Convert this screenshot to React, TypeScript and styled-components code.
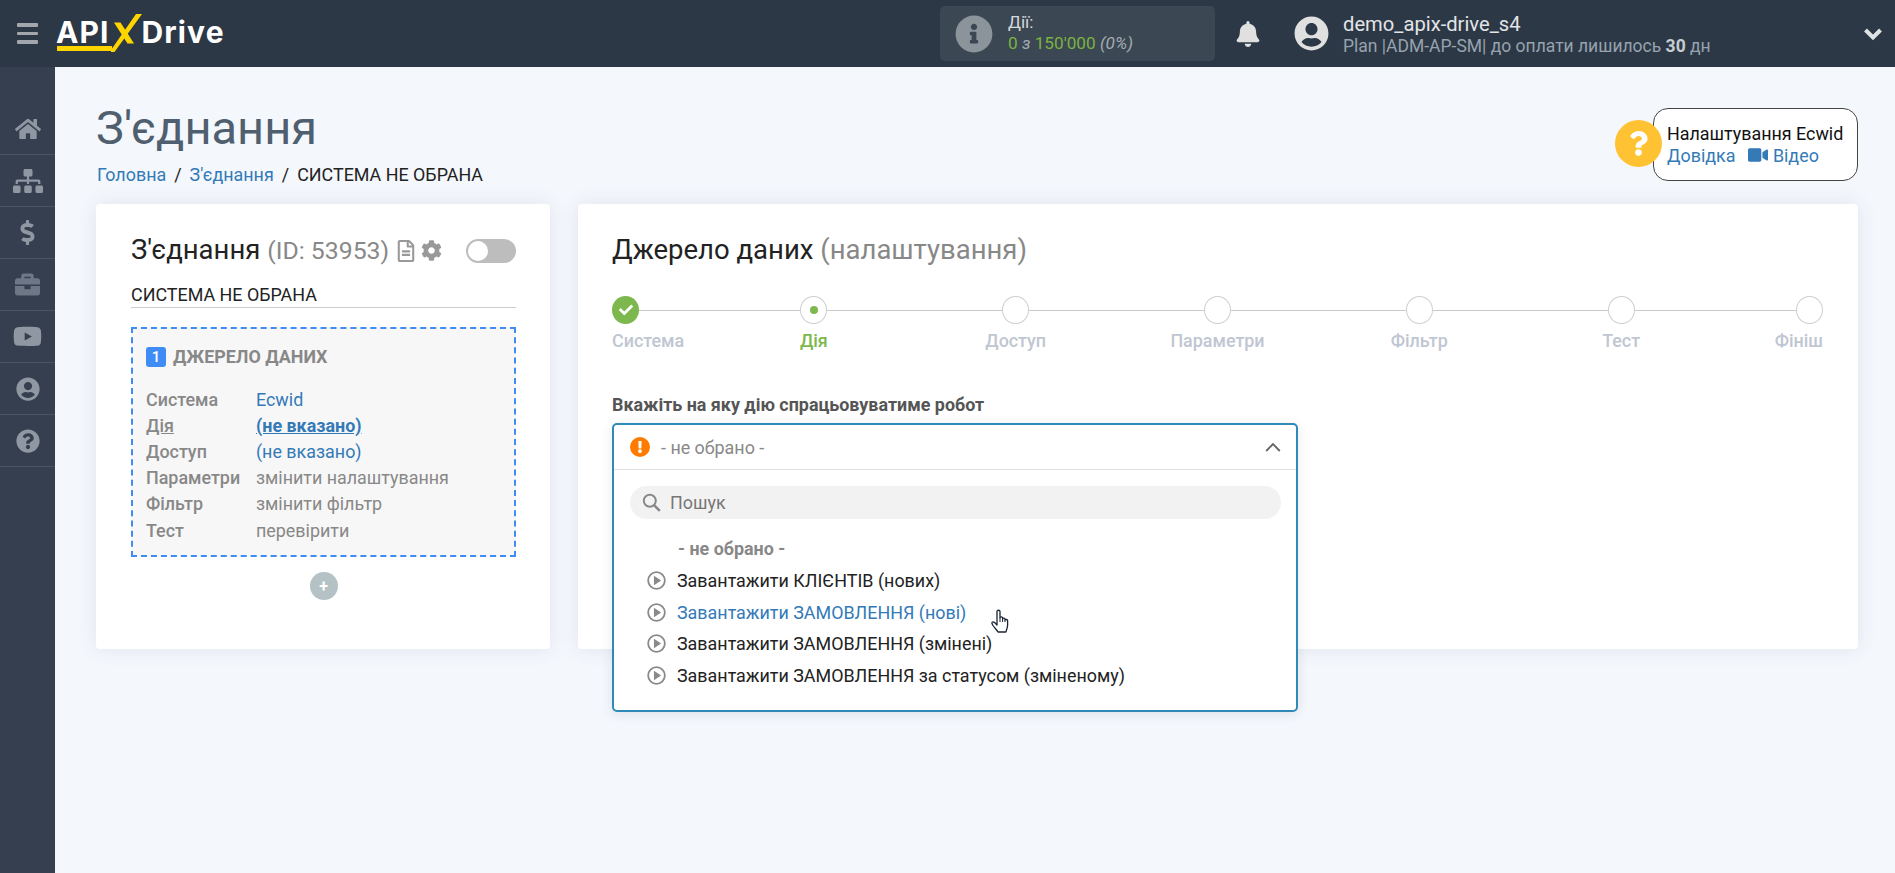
import React from 'react';
import styled, { createGlobalStyle } from 'styled-components';
import {
  FaBell,
  FaBriefcase,
  FaCheck,
  FaCog,
  FaDollarSign,
  FaExclamation,
  FaHome,
  FaInfoCircle,
  FaQuestion,
  FaQuestionCircle,
  FaRegFileAlt,
  FaSitemap,
  FaUserCircle,
  FaVideo,
  FaYoutube,
} from 'react-icons/fa';

const GlobalStyle = createGlobalStyle`
  html, body {
    margin: 0;
    height: 100%;
    background: #f4f7fc;
    font-family: Roboto, "Noto Sans", sans-serif;
    overflow: hidden;
  }
  * { box-sizing: border-box; }
`;

const navItems = [
  { icon: FaHome, size: 26 },
  { icon: FaSitemap, size: 30 },
  { icon: FaDollarSign, size: 25 },
  { icon: FaBriefcase, size: 25, dim: true },
  { icon: FaYoutube, size: 29 },
  { icon: FaUserCircle, size: 24 },
  { icon: FaQuestionCircle, size: 24 },
];

const summaryRows = [
  { label: 'Система', value: 'Ecwid', kind: 'link' },
  { label: 'Дія', value: '(не вказано)', kind: 'current' },
  { label: 'Доступ', value: '(не вказано)', kind: 'link' },
  { label: 'Параметри', value: 'змінити налаштування', kind: 'muted' },
  { label: 'Фільтр', value: 'змінити фільтр', kind: 'muted' },
  { label: 'Тест', value: 'перевірити', kind: 'muted' },
];

const steps = ['Система', 'Дія', 'Доступ', 'Параметри', 'Фільтр', 'Тест', 'Фініш'];

const options = [
  'Завантажити КЛІЄНТІВ (нових)',
  'Завантажити ЗАМОВЛЕННЯ (нові)',
  'Завантажити ЗАМОВЛЕННЯ (змінені)',
  'Завантажити ЗАМОВЛЕННЯ за статусом (зміненому)',
];

const PlayIcon = () => (
  <svg width="19" height="19" viewBox="0 0 18 18">
    <circle cx="9" cy="9" r="7.9" fill="none" stroke="#8a8a8a" strokeWidth="1.7" />
    <path d="M6.600 4.400 L13.400 9 L6.600 13.600 Z" fill="#8a8a8a" />
  </svg>
);

const SearchIcon = () => (
  <svg width="19" height="19" viewBox="0 0 19 19">
    <circle cx="7.800" cy="7.800" r="6" fill="none" stroke="#888" strokeWidth="2" />
    <path d="M12.300 12.300 L17.800 17.800" stroke="#888" strokeWidth="2.600" />
  </svg>
);

const HandCursor = () => (
  <svg width="18" height="24" viewBox="0 0 18 24">
    <path
      d="M6 2.500C6 .8 9 .8 9 2.500V8.800c0-1.200 2.600-1.200 2.600 0V10c0-1.200 2.400-1.200 2.400 0v1c0-1 2.600-1 2.600.4V16c0 3-1 4.500-1.800 7H7c-1-2-3-3.500-5-6.500C1 15 .4 13.500 1.500 13c1-.5 2.500.5 4.500 3V2.500Z"
      fill="#fff"
      stroke="#1a2433"
      strokeWidth="1.300"
      strokeLinejoin="round"
    />
    <path d="M9 8.800V13M11.600 10V13M14 11V13" stroke="#1a2433" strokeWidth="1" fill="none" />
  </svg>
);

export default function App() {
  return (
    <>
      <GlobalStyle />
      <Header>
        <Burger>
          <span />
          <span />
          <span />
        </Burger>
        <Logo>
          <LogoWord>API</LogoWord>
          <LogoMark width="31" height="42" viewBox="0 0 31 42">
            <path d="M25 1 H31 L3.500 39 H0 V37 Z" fill="#ffd500" />
            <path d="M3 9.500 H9.500 L23 30.500 H16.500 Z" fill="#ffd500" />
          </LogoMark>
          <LogoWord>Drive</LogoWord>
          <LogoLine />
        </Logo>
        <ActionsBox>
          <FaInfoCircle size={38} color="#8b939b" />
          <ActionsText>
            <ActionsLabel>Дії:</ActionsLabel>
            <ActionsCount>
              0 <em>з</em> 150'000 <i>(0%)</i>
            </ActionsCount>
          </ActionsText>
        </ActionsBox>
        <BellWrap>
          <FaBell size={26} color="#e0e0e0" />
        </BellWrap>
        <FaUserCircle size={35} color="#e0e0e0" />
        <UserText>
          <UserName>demo_apix-drive_s4</UserName>
          <UserPlan>
            Plan |ADM-AP-SM| до оплати лишилось <b>30</b> дн
          </UserPlan>
        </UserText>
        <HeaderChevron width="20" height="14" viewBox="0 0 20 14">
          <path d="M2.500 3 L10 10.500 L17.500 3" fill="none" stroke="#dfe3e6" strokeWidth="4" />
        </HeaderChevron>
      </Header>

      <Body>
        <Sidebar>
          {navItems.map((item, i) => (
            <NavItem key={i} $dim={item.dim}>
              <item.icon size={item.size} />
            </NavItem>
          ))}
        </Sidebar>

        <Main>
          <TopRow>
            <div>
              <PageTitle>З'єднання</PageTitle>
              <Breadcrumb>
                <a>Головна</a>
                <Sep>/</Sep>
                <a>З'єднання</a>
                <Sep>/</Sep>
                <span>СИСТЕМА НЕ ОБРАНА</span>
              </Breadcrumb>
            </div>
            <Help>
              <HelpBadge>
                <FaQuestion size={25} color="#fff" />
              </HelpBadge>
              <HelpBox>
                <HelpTitle>Налаштування Ecwid</HelpTitle>
                <HelpLinks>
                  <a>Довідка</a>
                  <a>
                    <FaVideo size={20} /> Відео
                  </a>
                </HelpLinks>
              </HelpBox>
            </Help>
          </TopRow>

          <Cards>
            <LeftCard>
              <CardHead>
                <CardTitle>
                  З'єднання <IdText>(ID: 53953)</IdText>
                </CardTitle>
                <FaRegFileAlt size={22} color="#999" />
                <FaCog size={21} color="#999" />
                <Toggle />
              </CardHead>
              <SystemName>СИСТЕМА НЕ ОБРАНА</SystemName>
              <SourceBox>
                <SourceTitle>
                  <NumBadge>1</NumBadge>
                  ДЖЕРЕЛО ДАНИХ
                </SourceTitle>
                <SummaryList>
                  {summaryRows.map(row => (
                    <SummaryRow key={row.label}>
                      <SummaryLabel $current={row.kind === 'current'}>{row.label}</SummaryLabel>
                      <SummaryValue $kind={row.kind}>{row.value}</SummaryValue>
                    </SummaryRow>
                  ))}
                </SummaryList>
              </SourceBox>
              <AddRow>
                <AddButton>+</AddButton>
              </AddRow>
            </LeftCard>

            <RightCard>
              <CardTitle>
                Джерело даних <Grey>(налаштування)</Grey>
              </CardTitle>
              <Stepper>
                {steps.map((step, i) => {
                  const first = i === 0;
                  const last = i === steps.length - 1;
                  return (
                    <Step key={step} $edge={first || last} $last={last}>
                      <StepTrack>
                        {!first && <StepLine />}
                        <StepCircle $done={first}>
                          {first && <FaCheck size={14} color="#fff" />}
                          {i === 1 && <StepDot />}
                        </StepCircle>
                        {!last && <StepLine />}
                      </StepTrack>
                      <StepLabel $active={i === 1}>{step}</StepLabel>
                    </Step>
                  );
                })}
              </Stepper>
              <FieldLabel>Вкажіть на яку дію спрацьовуватиме робот</FieldLabel>
              <SelectHolder>
                <Select>
                  <SelectHead>
                    <WarnIcon>
                      <FaExclamation size={12} color="#fff" />
                    </WarnIcon>
                    <SelectValue>- не обрано -</SelectValue>
                    <svg width="16" height="10" viewBox="0 0 16 10">
                      <path d="M1.200 9 L8 2 L14.800 9" fill="none" stroke="#666" strokeWidth="1.800" />
                    </svg>
                  </SelectHead>
                  <SelectMenu>
                    <SearchBox>
                      <SearchIcon />
                      Пошук
                    </SearchBox>
                    <OptionHeader>- не обрано -</OptionHeader>
                    {options.map((option, i) => (
                      <Option key={option} $hover={i === 1}>
                        <PlayIcon />
                        {option}
                        {i === 1 && (
                          <CursorSpot>
                            <HandCursor />
                          </CursorSpot>
                        )}
                      </Option>
                    ))}
                  </SelectMenu>
                </Select>
              </SelectHolder>
            </RightCard>
          </Cards>
        </Main>
      </Body>
    </>
  );
}

const Header = styled.header`
  height: 67px;
  background: #2c3846;
  display: flex;
  align-items: center;
  padding: 0 12px 0 17px;
`;

const Burger = styled.div`
  width: 21px;
  display: flex;
  flex-direction: column;
  gap: 5px;

  span {
    display: block;
    height: 3.5px;
    background: #a2a7ad;
    border-radius: 1px;
  }
`;

const Logo = styled.div`
  position: relative;
  margin-left: 18px;
  width: 170px;
  height: 46px;
  display: flex;
  align-items: center;
`;

const LogoWord = styled.span`
  font-family: Inter, "Open Sans", sans-serif;
  font-weight: 700;
  font-size: 30px;
  letter-spacing: 1.1px;
  color: #fff;
  margin-top: -3px;
`;

const LogoMark = styled.svg`
  margin: 0 0 0 1px;
  flex: none;
`;

const LogoLine = styled.span`
  position: absolute;
  left: 1px;
  bottom: 6px;
  width: 55px;
  height: 4.5px;
  background: #ffd500;
`;

const ActionsBox = styled.div`
  margin-left: 714px;
  width: 275px;
  height: 55px;
  border-radius: 5px;
  background: #3b4752;
  display: flex;
  align-items: center;
  gap: 15px;
  padding-left: 15px;
`;

const ActionsText = styled.div`
  display: flex;
  flex-direction: column;
  gap: 1px;
  font-size: 17.2px;
  margin-top: -2px;
`;

const ActionsLabel = styled.span`
  color: #d6d9dc;
`;

const ActionsCount = styled.span`
  color: #7cb342;

  em,
  i {
    color: #a3abb3;
  }
`;

const BellWrap = styled.div`
  margin: 0 33px 0 20px;
  display: flex;
`;

const UserText = styled.div`
  margin-left: 14px;
  display: flex;
  flex-direction: column;
`;

const UserName = styled.span`
  color: #e2e4e6;
  font-size: 20.2px;
`;

const UserPlan = styled.span`
  color: #97a3ae;
  font-size: 17.5px;

  b {
    color: #c6ccd2;
  }
`;

const HeaderChevron = styled.svg`
  margin-left: auto;
`;

const Body = styled.div`
  display: flex;
  height: 806px;
`;

const Sidebar = styled.nav`
  width: 55px;
  background: #353f4f;
  padding-top: 36px;
  flex: none;
`;

const NavItem = styled.div<{ $dim?: boolean }>`
  height: 52px;
  border-bottom: 1px solid #4a5462;
  color: ${p => (p.$dim ? '#6d7785' : '#8f98a2')};
  display: flex;
  align-items: center;
  justify-content: center;
`;

const Main = styled.main`
  flex: 1;
  padding: 0 37px 0 41px;
`;

const TopRow = styled.div`
  height: 137px;
  display: flex;
  justify-content: space-between;
  align-items: flex-start;
`;

const PageTitle = styled.h1`
  margin: 36px 0 0;
  font-size: 47px;
  line-height: 50px;
  font-weight: 400;
  color: #4f5f6f;
`;

const Breadcrumb = styled.div`
  margin-top: 11px;
  padding-left: 1px;
  font-size: 17.9px;
  line-height: 22px;
  color: #222;

  a {
    color: #337ab7;
  }
`;

const Sep = styled.span`
  margin: 0 8px;
`;

const Help = styled.div`
  margin-top: 41px;
  display: flex;
  align-items: center;
`;

const HelpBadge = styled.div`
  width: 47px;
  height: 47px;
  border-radius: 50%;
  background: #ffc233;
  margin: -2px -9px 0 0;
  position: relative;
  display: flex;
  align-items: center;
  justify-content: center;
`;

const HelpBox = styled.div`
  width: 205px;
  height: 73px;
  border: 1px solid #444;
  border-radius: 15px;
  background: #fff;
  padding: 14px 0 0 13px;
`;

const HelpTitle = styled.div`
  font-size: 17.9px;
  line-height: 22px;
  color: #111;
`;

const HelpLinks = styled.div`
  display: flex;
  gap: 13px;
  font-size: 17.9px;
  line-height: 22px;
  color: #337ab7;

  svg {
    vertical-align: -3px;
  }
`;

const Cards = styled.div`
  display: flex;
  gap: 28px;
  align-items: flex-start;
`;

const Card = styled.section`
  height: 445px;
  background: #fff;
  border-radius: 4px;
  box-shadow: 0 0 20px rgba(60, 80, 110, 0.1);
`;

const LeftCard = styled(Card)`
  width: 454px;
  padding: 28px 34px 0 35px;
`;

const RightCard = styled(Card)`
  flex: 1;
  padding: 28px 35px 0 34px;
`;

const CardHead = styled.div`
  display: flex;
  align-items: center;
  gap: 4px;

  h2 {
    margin-right: 2px;
  }
`;

const CardTitle = styled.h2`
  margin: 0;
  font-size: 27.5px;
  line-height: 36px;
  font-weight: 400;
  color: #222;
`;

const Grey = styled.span`
  color: #888;
`;

const IdText = styled(Grey)`
  font-size: 24.8px;
`;

const Toggle = styled.span`
  margin-left: auto;
  width: 50px;
  height: 24px;
  border-radius: 12px;
  background: #bdbdbd;
  display: flex;
  align-items: center;
  padding-left: 2px;

  &::before {
    content: '';
    width: 20px;
    height: 20px;
    border-radius: 50%;
    background: #fff;
  }
`;

const SystemName = styled.div`
  margin-top: 14px;
  font-size: 17.9px;
  line-height: 24px;
  color: #222;
  border-bottom: 1px solid #ccc;
`;

const SourceBox = styled.div`
  margin-top: 19px;
  height: 230px;
  border: 2px dashed #3f8cf5;
  background: #f7f7f7;
  padding: 17px 13px 0;
`;

const SourceTitle = styled.div`
  display: flex;
  align-items: center;
  gap: 7px;
  font-size: 17.9px;
  line-height: 22px;
  font-weight: 700;
  color: #888;
`;

const NumBadge = styled.span`
  width: 20px;
  height: 20px;
  border-radius: 3px;
  background: #3f8cf5;
  color: #fff;
  font-size: 15px;
  font-weight: 500;
  display: flex;
  align-items: center;
  justify-content: center;
`;

const SummaryList = styled.div`
  margin-top: 18px;
  display: flex;
  flex-direction: column;
`;

const SummaryRow = styled.div`
  display: flex;
  height: 26.2px;
  align-items: center;
  font-size: 17.9px;
`;

const SummaryLabel = styled.span<{ $current?: boolean }>`
  width: 110px;
  font-weight: 500;
  color: #888;
  text-decoration: ${p => (p.$current ? 'underline' : 'none')};
`;

const SummaryValue = styled.span<{ $kind: string }>`
  color: ${p => (p.$kind === 'muted' ? '#888' : '#337ab7')};
  font-weight: ${p => (p.$kind === 'current' ? 700 : 400)};
  text-decoration: ${p => (p.$kind === 'current' ? 'underline' : 'none')};
`;

const AddRow = styled.div`
  margin-top: 15px;
  display: flex;
  justify-content: center;
`;

const AddButton = styled.span`
  width: 28px;
  height: 28px;
  border-radius: 50%;
  background: #b4c2c6;
  color: #fff;
  font-size: 16px;
  font-weight: 700;
  display: flex;
  align-items: center;
  justify-content: center;
`;

const Stepper = styled.div`
  margin-top: 28px;
  display: flex;
`;

const Step = styled.div<{ $edge: boolean; $last: boolean }>`
  flex: ${p => (p.$edge ? 1 : 2)} 1 0;
  min-width: 0;
  display: flex;
  flex-direction: column;
  align-items: ${p => (p.$last ? 'flex-end' : p.$edge ? 'flex-start' : 'center')};
`;

const StepTrack = styled.div`
  width: 100%;
  display: flex;
  align-items: center;
`;

const StepLine = styled.span`
  flex: 1;
  height: 1px;
  background: #c9c9c9;
`;

const StepCircle = styled.span<{ $done: boolean }>`
  width: 27px;
  height: 28px;
  flex: none;
  border-radius: 50%;
  border: ${p => (p.$done ? 'none' : '1px solid #cfcfcf')};
  background: ${p => (p.$done ? '#7cb84e' : '#fff')};
  display: flex;
  align-items: center;
  justify-content: center;
`;

const StepDot = styled.span`
  width: 8px;
  height: 8px;
  border-radius: 50%;
  background: #7cb84e;
`;

const StepLabel = styled.span<{ $active: boolean }>`
  margin-top: 5px;
  font-size: 17.9px;
  line-height: 24px;
  font-weight: 500;
  white-space: nowrap;
  color: ${p => (p.$active ? '#7cb84e' : '#c0c6d2')};
`;

const FieldLabel = styled.div`
  margin-top: 41px;
  font-size: 17.9px;
  line-height: 22px;
  font-weight: 700;
  color: #555;
`;

const SelectHolder = styled.div`
  position: relative;
  margin-top: 7px;
  height: 47px;
`;

const Select = styled.div`
  position: absolute;
  top: 0;
  left: 0;
  width: 686px;
  height: 289px;
  background: #fff;
  border: 2px solid #2f8ab8;
  border-radius: 5px;
  box-shadow: 0 2px 12px rgba(60, 80, 110, 0.12);
`;

const SelectHead = styled.div`
  height: 45px;
  border-bottom: 1px solid #e0e0e0;
  display: flex;
  align-items: center;
  padding: 0 15px 0 16px;
`;

const WarnIcon = styled.span`
  width: 20px;
  height: 20px;
  border-radius: 50%;
  background: #ff7a00;
  display: flex;
  align-items: center;
  justify-content: center;
`;

const SelectValue = styled.span`
  flex: 1;
  margin-left: 11px;
  font-size: 17.9px;
  color: #888;
`;

const SelectMenu = styled.div`
  padding: 16px 15px 0 16px;
`;

const SearchBox = styled.div`
  height: 33px;
  border-radius: 17px;
  background: #f2f2f2;
  display: flex;
  align-items: center;
  gap: 9px;
  padding-left: 12px;
  font-size: 17.9px;
  color: #777;
`;

const OptionHeader = styled.div`
  margin-top: 14px;
  padding-left: 48px;
  font-size: 17.9px;
  line-height: 31.7px;
  font-weight: 700;
  color: #888;
`;

const Option = styled.div<{ $hover: boolean }>`
  position: relative;
  display: flex;
  align-items: center;
  gap: 11px;
  height: 31.7px;
  padding-left: 17px;
  font-size: 17.9px;
  color: ${p => (p.$hover ? '#337ab7' : '#222')};
`;

const CursorSpot = styled.span`
  position: absolute;
  left: 361px;
  top: 13px;
  display: flex;
`;
